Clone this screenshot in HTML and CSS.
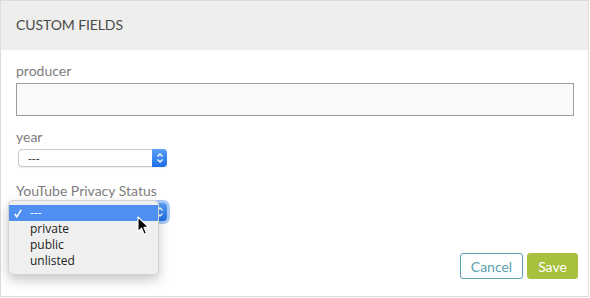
FILE: index.html
```html
<!DOCTYPE html>
<html lang="en">
<head>
<meta charset="UTF-8" />
<title>Custom Fields</title>
<link rel="stylesheet" href="styles.css">
</head>
<body>

<div class="panel">
  <div class="panel-head">CUSTOM FIELDS</div>

  <div class="panel-body">
    <div class="field field-text">
      <label>producer</label>
      <div class="text-input"></div>
    </div>

    <div class="field field-year">
      <label>year</label>
      <div class="select">
        <span class="select-value">---</span>
        <span class="stepper">
          <svg width="8" height="12" viewBox="0 0 8 12"><path d="M1.5 4.5 L4 2 L6.5 4.5 M1.5 7.5 L4 10 L6.5 7.5" fill="none" stroke="#fff" stroke-width="1.3"/></svg>
        </span>
      </div>
    </div>

    <div class="field">
      <label>YouTube Privacy Status</label>
      <div class="select focused">
        <span class="select-value"></span>
        <span class="stepper">
          <svg width="8" height="12" viewBox="0 0 8 12"><path d="M1.5 4.5 L4 2 L6.5 4.5 M1.5 7.5 L4 10 L6.5 7.5" fill="none" stroke="#fff" stroke-width="1.3"/></svg>
        </span>

        <!-- menu ouvert -->
        <ul class="menu">
          <li class="active">
            <svg class="check" width="8" height="9" viewBox="0 0 8 9"><path d="M0.8 5 L2.8 7.8 L7.2 0.8" fill="none" stroke="#fff" stroke-width="1.5"/></svg>
            ---
          </li>
          <li>private</li>
          <li>public</li>
          <li>unlisted</li>
        </ul>

        <svg class="cursor" width="13" height="20" viewBox="0 0 13 20">
          <path d="M1 1 L1 15.5 L4.6 12.2 L7.2 18.2 L9.4 17.3 L6.9 11.4 L11.6 11.4 Z" fill="#000" stroke="#fff" stroke-width="1.1" stroke-linejoin="round"/>
        </svg>
      </div>
    </div>
  </div>

  <div class="panel-foot">
    <button class="btn btn-cancel">Cancel</button>
    <button class="btn btn-save">Save</button>
  </div>
</div>

</body>
</html>
```

FILE: styles.css
```css
body {
  margin: 0;
  font-family: Lato, "Open Sans", sans-serif;
  background: #fff;
}
.panel {
  width: 589px;
  height: 297px;
  box-sizing: border-box;
  border: 1px solid #dcdcdc;
  display: flex;
  flex-direction: column;
}
.panel-head {
  height: 49px;
  background: #eeeeed;
  padding-left: 15px;
  font-size: 14px;
  line-height: 47px;
  color: #4a4a4a;
  letter-spacing: -0.1px;
}
.panel-body {
  padding: 12px 14px 0 15px;
}
.field label {
  display: block;
  font-size: 14px;
  line-height: 18px;
  color: #7d7d7d;
  margin-bottom: 3px;
}
.field-text {
  margin-bottom: 12px;
}
.field-year {
  margin-bottom: 15px;
}
.text-input {
  height: 31px;
  border: 1px solid #9d9d9d;
  background: #f9f9f9;
}
.select {
  position: relative;
  width: 149px;
  height: 18px;
  margin-left: 2px;
  box-sizing: border-box;
  border: 1px solid #c9c9c9;
  border-radius: 4px;
  background: #fff;
  box-shadow: 0 1px 1px rgba(0,0,0,0.08);
  display: flex;
  align-items: center;
}
.select-value {
  flex: 1;
  padding-left: 9px;
  font-family: "Open Sans", sans-serif;
  font-size: 12px;
  color: #444;
}
.stepper {
  width: 15px;
  height: 18px;
  margin: -1px -1px -1px 0;
  border-radius: 0 4px 4px 0;
  background: linear-gradient(#5aa0f7, #1f6fe6);
  display: flex;
  align-items: center;
  justify-content: center;
}
.select.focused {
  box-shadow: 0 0 0 3px rgba(95, 155, 240, 0.55);
}
.menu {
  position: absolute;
  left: -11px;
  top: -4px;
  width: 149px;
  margin: 0;
  padding: 4px 0 5px;
  list-style: none;
  background: #efefef;
  border: 1px solid #d4d4d4;
  border-radius: 5px;
  box-shadow: 0 5px 12px rgba(0,0,0,0.22);
  font-family: "Open Sans", sans-serif;
  font-size: 12px;
  color: #222;
}
.menu li {
  position: relative;
  height: 16px;
  line-height: 16px;
  padding-left: 21px;
}
.menu li.active {
  background: #4f8ff1;
  color: #fff;
}
.check {
  position: absolute;
  left: 5px;
  top: 4px;
}
.cursor {
  position: absolute;
  left: 118px;
  top: 12px;
}
.panel-foot {
  margin-top: 32px;
  display: flex;
  justify-content: flex-end;
  gap: 4px;
  padding-right: 10px;
}
.btn {
  height: 26px;
  border-radius: 3px;
  font-family: Lato, "Open Sans", sans-serif;
  font-size: 14px;
  cursor: pointer;
}
.btn-cancel {
  width: 63px;
  background: #fff;
  border: 1px solid #5a9fad;
  color: #5a9fad;
}
.btn-save {
  width: 51px;
  background: #a7c03d;
  border: 1px solid #a7c03d;
  color: #fff;
}
```
